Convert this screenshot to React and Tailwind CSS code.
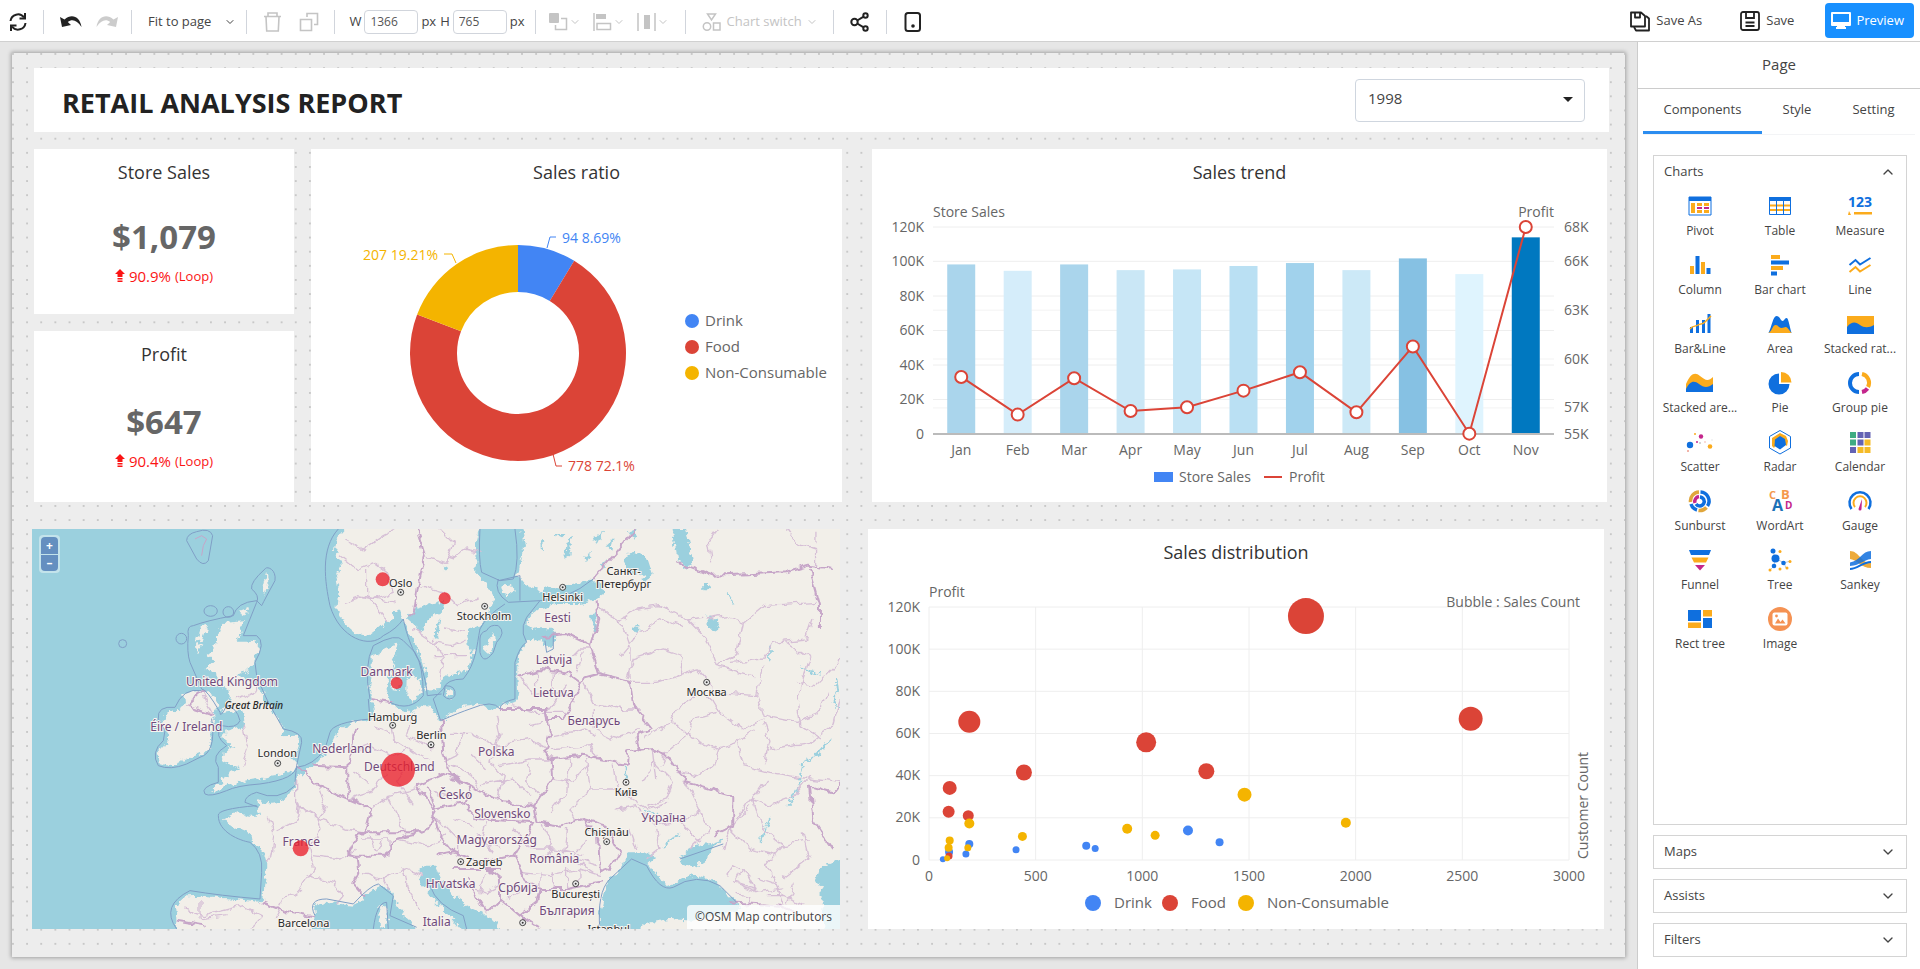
import React, { useState } from 'react';
import { FiChevronDown, FiChevronUp } from 'react-icons/fi';

const BLUE = '#4285f4';
const RED = '#db4437';
const YELLOW = '#f4b400';
const ICON_BLUE = '#0f6fde';
const ICON_ORANGE = '#fbab1c';
const ICON_PINK = '#c4268c';

/* ---------- toolbar ---------- */

function Divider() {
  return <span className="h-6 w-px bg-gray-300" />;
}

function ToolIcon({ label, children, disabled = false }) {
  return (
    <button type="button" aria-label={label} disabled={disabled} className="flex h-6 w-[22px] items-center justify-center">
      <svg viewBox="0 0 22 22" className="h-[22px] w-[22px] shrink-0" fill="none" stroke="currentColor" strokeWidth="2">
        {children}
      </svg>
    </button>
  );
}

function MenuIcon({ label, children }) {
  return (
    <button type="button" aria-label={label} disabled className="flex h-6 items-center gap-px text-[#c4c4c4]">
      <svg viewBox="0 0 20 22" className="h-[22px] w-5" fill="none" stroke="currentColor" strokeWidth="1.5">
        {children}
      </svg>
      <FiChevronDown className="h-3 w-3" />
    </button>
  );
}

function SizeInput({ id, label, value, onChange }) {
  return (
    <div className="flex items-center gap-[3px]">
      <label htmlFor={id}>{label}</label>
      <input
        id={id}
        value={value}
        onChange={(e) => onChange(e.target.value)}
        className="h-6 w-[54px] rounded-sm border border-gray-300 pl-[5px] text-xs text-[#555] outline-none"
      />
      <span>px</span>
    </div>
  );
}

function Toolbar() {
  const [width, setWidth] = useState('1366');
  const [height, setHeight] = useState('765');

  return (
    <header className="flex h-[42px] items-center justify-between border-b border-[#d0d0d0] bg-white pr-[6px] pl-[7px] text-[13px] text-[#444]">
      <div className="flex items-center pt-[2px]">
        <div className="flex items-center text-[#222]">
          <ToolIcon label="Refresh">
            <path d="M3.5 10A7.5 7.5 0 0 1 17 6.5M18.500 12A7.500 7.500 0 0 1 5 15.500" />
            <path d="M18 2v5.500h-5.500M4 20v-5.500h5.500" />
          </ToolIcon>
        </div>
        <div className="ml-[14px] flex items-center gap-4">
          <Divider />
          <div className="flex items-center gap-[14px]">
            <ToolIcon label="Undo">
              <path d="M0 6l2 10 9-2-3.200-3C12 7.500 17 9 21.500 16 20 6 12 2 4.500 8.500z" fill="#222" stroke="none" />
            </ToolIcon>
            <ToolIcon label="Redo" disabled>
              <path d="M22 6l-2 10-9-2 3.200-3C10 7.500 5 9 .5 16 2 6 10 2 17.500 8.500z" fill="#ccc" stroke="none" />
            </ToolIcon>
          </div>
        </div>
        <div className="ml-[13px] flex items-center gap-4">
          <Divider />
          <button type="button" className="flex items-center gap-[13px]">
            Fit to page
            <FiChevronDown className="h-3 w-3" />
          </button>
        </div>
        <div className="ml-[10px] flex items-center gap-[14px]">
          <Divider />
          <div className="flex gap-[15px] text-[#c4c4c4]">
            <ToolIcon label="Delete" disabled>
              <path d="M3 5.500h17M7 5V2h9v3M5 6l.7 14h11.600L18 6" strokeWidth="1.600" />
            </ToolIcon>
            <ToolIcon label="Duplicate" disabled>
              <path d="M2.500 8.500h11v11h-11zM9 6V2.500h10.500v11H16" strokeWidth="1.600" />
            </ToolIcon>
          </div>
          <Divider />
          <div className="flex items-center gap-1">
            <SizeInput id="page-width" label="W" value={width} onChange={setWidth} />
            <SizeInput id="page-height" label="H" value={height} onChange={setHeight} />
          </div>
        </div>
        <div className="ml-[10px] flex items-center gap-3">
          <Divider />
          <div className="flex items-center gap-[11px]">
            <MenuIcon label="Layer order">
              <rect x="1" y="2" width="10" height="10" rx="1" fill="currentColor" stroke="none" />
              <path d="M13 7.500h5.500v11h-11V14" />
            </MenuIcon>
            <MenuIcon label="Align">
              <path d="M2 2v18" />
              <rect x="4" y="3" width="10" height="5" fill="currentColor" stroke="none" />
              <rect x="5" y="12.500" width="13.500" height="6" />
            </MenuIcon>
            <MenuIcon label="Distribute">
              <path d="M2 2v18M19 2v18" />
              <rect x="8" y="4" width="6" height="14" fill="currentColor" stroke="none" />
            </MenuIcon>
          </div>
        </div>
        <div className="ml-4 flex items-center gap-[15px]">
          <Divider />
          <button type="button" disabled className="flex items-center gap-1 text-[#c4c4c4]">
            <svg viewBox="0 0 22 22" className="h-[22px] w-[22px]" fill="none" stroke="currentColor" strokeWidth="1.500">
              <path d="M6.500 3h8L10.500 9z" />
              <circle cx="6" cy="15.500" r="3.700" />
              <rect x="12.500" y="12" width="6.500" height="7" />
            </svg>
            Chart switch
            <FiChevronDown className="h-3 w-3" />
          </button>
          <Divider />
          <div className="flex text-[#222]">
            <ToolIcon label="Share">
              <circle cx="5.500" cy="11" r="3.200" />
              <circle cx="16.500" cy="4.500" r="2.200" />
              <circle cx="16.500" cy="17.500" r="2.200" />
              <path d="M8.200 9.500l6-3.600M8.200 12.500l6 3.600" />
            </ToolIcon>
          </div>
          <Divider />
          <div className="flex text-[#222]">
            <ToolIcon label="Mobile layout">
              <rect x="3.500" y="2" width="14.500" height="18" rx="2.500" />
              <circle cx="11" cy="15" r="1.800" fill="currentColor" stroke="none" />
            </ToolIcon>
          </div>
        </div>
      </div>

      <div className="flex items-center">
        <button type="button" className="flex items-center gap-[5px]">
          <svg viewBox="0 0 22 22" className="h-[22px] w-[22px] text-[#222]" fill="none" stroke="currentColor" strokeWidth="1.800">
            <path d="M2 2.500h10l4 3.500v10.500h-14z M6 3v4.500h5V3" strokeLinejoin="round" />
            <path d="M17 6l3 2.500V20.500H7L5 17" strokeLinejoin="round" />
          </svg>
          Save As
        </button>
        <button type="button" className="ml-[37px] flex items-center gap-[5px]">
          <svg viewBox="0 0 22 22" className="h-[22px] w-[22px] text-[#222]" fill="none" stroke="currentColor" strokeWidth="1.800">
            <rect x="2" y="2" width="18" height="18" rx="2" />
            <path d="M7 2.500V8h8V2.500M6.500 12.500h9M6.500 16h9" />
          </svg>
          Save
        </button>
        <button type="button" className="ml-[31px] flex h-[35px] items-center gap-1 rounded-sm bg-[#1890ff] px-[5px] pr-[10px] text-white">
          <svg viewBox="0 0 22 22" className="h-[22px] w-[22px]" fill="currentColor">
            <path fillRule="evenodd" d="M2 2h18a1 1 0 0 1 1 1v12a1 1 0 0 1-1 1h-5v1h1v2H6v-2h1v-1H2a1 1 0 0 1-1-1V3a1 1 0 0 1 1-1zm1 2v8h16V4z" />
          </svg>
          Preview
        </button>
      </div>
    </header>
  );
}

/* ---------- dashboard cards ---------- */

function Card({ title, className = '', children }) {
  return (
    <section className={`flex min-w-0 flex-col bg-white ${className}`}>
      <h2 className="flex h-[43px] items-center justify-center pt-[2px] text-lg text-[#333]">{title}</h2>
      {children}
    </section>
  );
}

function Kpi({ title, value, change, className }) {
  return (
    <Card title={title} className={className}>
      <div className="flex grow flex-col items-center justify-center pb-[2px]">
        <p className="text-[33px] leading-12 font-bold text-[#666]">{value}</p>
        <p className="flex items-center gap-1 text-[15px] leading-[30px] text-[#fb1414]">
          <svg viewBox="0 0 10 14" className="h-[14px] w-[10px]" fill="currentColor">
            <path d="M5 0l5 5H7.500v3h-5V5H0zM2.500 9h5v1.500h-5zM2.500 11.500h5V13h-5z" />
          </svg>
          {change}
          <span className="text-[13px]">(Loop)</span>
        </p>
      </div>
    </Card>
  );
}

const RATIO = [
  { name: 'Drink', value: 94, label: '94 8.69%', color: BLUE, leader: '236,56 239,45 245,45', tx: 251, ty: 45, anchor: 'start' },
  { name: 'Food', value: 778, label: '778 72.1%', color: RED, leader: '242,262 245,274 251,274', tx: 257, ty: 273, anchor: 'start' },
  { name: 'Non-Consumable', value: 207, label: '207 19.21%', color: YELLOW, leader: '145,71 141,62 133,62', tx: 127, ty: 62, anchor: 'end' },
];

function DonutChart() {
  const cx = 207;
  const cy = 161;
  const total = RATIO.reduce((sum, d) => sum + d.value, 0);
  const point = (r, a) => `${cx + r * Math.sin(a)} ${cy - r * Math.cos(a)}`;
  let start = 0;

  return (
    <svg viewBox="0 0 531 310" className="block w-full" fontSize="15">
      {RATIO.map((d, i) => {
        const a0 = start;
        const a1 = start + (d.value / total) * Math.PI * 2;
        start = a1;
        const large = a1 - a0 > Math.PI ? 1 : 0;
        return (
          <g key={d.name}>
            <path
              d={`M${point(108, a0)}A108 108 0 ${large} 1 ${point(108, a1)}L${point(61, a1)}A61 61 0 ${large} 0 ${point(61, a0)}Z`}
              fill={d.color}
            />
            <polyline points={d.leader} fill="none" stroke={d.color} />
            <text x={d.tx} y={d.ty} textAnchor={d.anchor} dominantBaseline="central" fontSize="14" fill={d.color}>{d.label}</text>
            <circle cx="381" cy={129 + i * 26} r="7" fill={d.color} />
            <text x="394" y={128 + i * 26} dominantBaseline="central" fill="#666">{d.name}</text>
          </g>
        );
      })}
    </svg>
  );
}

const TREND = [
  { month: 'Jan', sales: 98.3, profit: 58.9, color: '#aad5ec' },
  { month: 'Feb', sales: 94.6, profit: 56.59, color: '#d5edfa' },
  { month: 'Mar', sales: 98.3, profit: 58.82, color: '#aad5ec' },
  { month: 'Apr', sales: 95, profit: 56.81, color: '#cae7f6' },
  { month: 'May', sales: 95.4, profit: 57.04, color: '#c6e6f6' },
  { month: 'Jun', sales: 97.4, profit: 58.06, color: '#bae0f3' },
  { month: 'Jul', sales: 99.1, profit: 59.19, color: '#a1d2ec' },
  { month: 'Aug', sales: 95, profit: 56.73, color: '#cce9f7' },
  { month: 'Sep', sales: 101.8, profit: 60.77, color: '#86c1e3' },
  { month: 'Oct', sales: 92.7, profit: 55.42, color: '#dff4fe' },
  { month: 'Nov', sales: 114, profit: 68.1, color: '#0078c0' },
];

function TrendChart() {
  const left = 61;
  const right = 682;
  const top = 35;
  const bottom = 242;
  const step = (right - left) / TREND.length;
  const xAt = (i) => left + step * (i + 0.5);
  const salesY = (v) => bottom - (v / 120) * (bottom - top);
  const profitY = (v) => bottom - ((v - 55.4) / 12.7) * (bottom - top);
  const salesTicks = [0, 20, 40, 60, 80, 100, 120];
  const profitTicks = [57, 60, 63, 66];

  return (
    <svg viewBox="0 0 735 310" className="block w-full" fontSize="14" fill="#666">
      {salesTicks.map((t) => (
        <g key={t}>
          <line x1={left} x2={right} y1={salesY(t)} y2={salesY(t)} stroke="#eee" />
          <text x="52" y={salesY(t) - 1} textAnchor="end" dominantBaseline="central">{t ? `${t}K` : '0'}</text>
        </g>
      ))}
      {profitTicks.map((t) => (
        <g key={t}>
          <line x1={left} x2={right} y1={profitY(t)} y2={profitY(t)} stroke="#f3f3f3" />
          <text x="692" y={profitY(t) - 1} dominantBaseline="central">{t}K</text>
        </g>
      ))}
      <text x="692" y={top - 1} dominantBaseline="central">68K</text>
      <text x="692" y={bottom - 1} dominantBaseline="central">55K</text>
      <text x={left} y="19" dominantBaseline="central">Store Sales</text>
      <text x={right} y="19" textAnchor="end" dominantBaseline="central">Profit</text>

      {TREND.map((d, i) => (
        <g key={d.month}>
          <rect x={xAt(i) - 14} y={salesY(d.sales)} width="28" height={bottom - salesY(d.sales)} fill={d.color} />
          <text x={xAt(i)} y="257" textAnchor="middle" dominantBaseline="central">{d.month}</text>
        </g>
      ))}
      <line x1={left} x2={right} y1={bottom} y2={bottom} stroke="#bbb" strokeWidth="2" />
      <polyline
        points={TREND.map((d, i) => `${xAt(i)},${profitY(d.profit)}`).join(' ')}
        fill="none"
        stroke={RED}
        strokeWidth="2"
      />
      {TREND.map((d, i) => (
        <circle key={d.month} cx={xAt(i)} cy={profitY(d.profit)} r="6" fill="#fff" stroke={RED} strokeWidth="2" />
      ))}

      <rect x="282" y="280" width="19" height="10" fill={BLUE} />
      <text x="307" y="284" dominantBaseline="central">Store Sales</text>
      <line x1="392" x2="410" y1="285" y2="285" stroke={RED} strokeWidth="2" />
      <text x="417" y="284" dominantBaseline="central">Profit</text>
    </svg>
  );
}

// each bubble: [customer count, profit in thousands, radius]
const BUBBLES = [
  {
    name: 'Drink',
    color: BLUE,
    x: 225,
    points: [
      [1214, 14, 5], [1362, 8.4, 4], [737, 6.8, 4], [779, 5.4, 3.5], [408, 4.9, 3.5],
      [189, 7.6, 4], [173, 2.8, 3.5], [94, 3.8, 4], [65, 0.3, 3],
    ],
  },
  {
    name: 'Food',
    color: RED,
    x: 302,
    points: [
      [1767, 115.7, 18], [2539, 67, 12], [189, 65.6, 11], [1018, 55.8, 10], [445, 41.5, 8],
      [1300, 42.1, 8], [97, 34.2, 7], [92, 22.9, 6], [184, 21, 5.5], [94, 1.9, 3.5],
    ],
  },
  {
    name: 'Non-Consumable',
    color: YELLOW,
    x: 378,
    points: [
      [1479, 31, 7], [1954, 17.7, 5], [189, 17.3, 5], [929, 14.8, 5], [1060, 11.7, 4.5],
      [438, 11.2, 4.5], [97, 9.3, 4], [92, 5.8, 4], [182, 5.8, 3.5], [85, 0.8, 3],
    ],
  },
];

function DistributionChart() {
  const xAt = (v) => 61 + (v / 3000) * 640;
  const yAt = (v) => 288 - (v / 120) * 253;

  return (
    <svg viewBox="0 0 736 357" className="block w-full" fontSize="14" fill="#666">
      {[0, 20, 40, 60, 80, 100, 120].map((t) => (
        <g key={t}>
          <line x1="61" x2="701" y1={yAt(t)} y2={yAt(t)} stroke="#eee" />
          <text x="52" y={yAt(t) - 1} textAnchor="end" dominantBaseline="central">{t ? `${t}K` : '0'}</text>
        </g>
      ))}
      {[0, 500, 1000, 1500, 2000, 2500, 3000].map((t) => (
        <g key={t}>
          <line x1={xAt(t)} x2={xAt(t)} y1="35" y2="288" stroke="#eee" />
          <text x={xAt(t)} y="303" textAnchor="middle" dominantBaseline="central">{t}</text>
        </g>
      ))}
      <text x="61" y="19" dominantBaseline="central">Profit</text>
      <text x="712" y="29" textAnchor="end" dominantBaseline="central">Bubble : Sales Count</text>
      <text transform="translate(714 287) rotate(-90)" dominantBaseline="central">Customer Count</text>
      {BUBBLES.map((s) => (
        <g key={s.name}>
          {s.points.map(([x, y, r]) => (
            <circle key={`${x}-${y}`} cx={xAt(x)} cy={yAt(y)} r={r} fill={s.color} />
          ))}
          <circle cx={s.x} cy="331" r="8" fill={s.color} />
          <text x={s.x + 21} y="330" fontSize="15" dominantBaseline="central">{s.name}</text>
        </g>
      ))}
    </svg>
  );
}

/* ---------- map ---------- */

// map geometry is kept in tile units, three to a pixel, with its corner at (36, 30)
const px = (x) => (x - 36) / 3;
const py = (y) => (y - 30) / 3;

const LAND = [
  // continental Europe
  'M1055 540L1065 575 1050 602 1000 610 960 630 945 660 930 690 905 715 885 740 860 755 840 765 825 790 820 815 770 850 725 855 712 838 715 870 722 890 690 890 650 880 612 898 630 918 660 930 695 945 700 970 730 1000 742 1040 735 1090 725 1150 700 1145 620 1138 550 1130 500 1132 468 1160 472 1200 470 1240H870L888 1190 885 1160 920 1148 960 1155 1000 1160 1040 1130 1080 1100 1110 1115 1130 1150 1160 1200 1205 1240H1330L1290 1190 1250 1150 1205 1095 1198 1055 1215 1040 1245 1040 1262 1080 1290 1120 1360 1170 1430 1210 1445 1240H2470V20H1505L1515 80 1500 130 1495 170 1520 200 1560 215 1610 205 1660 195 1710 185 1745 190 1755 220 1730 240 1680 255 1610 255 1560 268 1520 300 1535 325 1590 325 1610 345 1600 385 1580 388 1570 370 1540 358 1520 370 1500 400 1492 440 1492 480 1495 520 1490 545 1445 560 1410 575 1380 555 1330 560 1290 585 1262 605 1235 565 1200 560 1170 580 1140 570 1112 555 1100 510 1105 470 1125 445 1115 425 1130 400 1135 370 1110 385 1080 400 1055 410 1055 450 1048 500z',
  // Scandinavia
  'M985 20L950 60 945 100 965 130 948 170 958 220 952 270 975 315 1010 345 1045 350 1080 325 1110 300 1138 268 1145 290 1165 330 1190 380 1210 430 1222 480 1215 512 1262 510 1265 480 1290 462 1340 455 1352 420 1345 370 1340 330 1380 320 1400 300 1412 270 1425 240 1405 200 1380 180 1365 160 1370 120 1368 70 1380 20z',
  // Great Britain
  'M610 312L672 307 668 325 650 368 690 368 718 372 712 400 700 425 690 450 650 470 690 482 722 510 732 540 748 565 770 590 788 620 785 652 828 650 838 672 832 700 812 715 835 738 830 752 760 772 690 782 640 795 612 802 590 818 572 812 602 790 625 760 658 745 608 730 605 712 640 680 614 660 612 635 668 625 676 598 670 572 610 582 603 565 630 540 625 512 592 500 588 460 560 450 580 425 560 405 578 390 592 350 600 325z',
  // Ireland
  'M490 525L545 512 575 525 592 555 580 590 575 640 570 690 540 705 500 720 450 738 420 730 410 705 432 680 450 655 430 625 425 600 440 580 480 575 492 550z',
  // islands
  'M545 322l20-5-16 42-20 15zM528 380l16-5-12 28zM738 160l8 30-12 34-8-14zM660 275l22-8 4 14-16 10zM1115 478h30l-5 38-25-2zM1160 478l35-8 10 40-28 42-18-30zM1085 1160l18 12-2 42-10 18-20-30zM1420 340l5 22-22 42-12-12zM1360 390l-24 60 5 2 26-60zM1280 515l16-4 4 16-14 6zM1440 205l30-10 18 22-30 16zM1520 310l25-10 25 15-30 15-20-5zM1535 280l20-4-5 20z',
];

const LAKES = [
  'M1810 120L1840 95 1882 120 1895 160 1880 185 1845 165 1825 150zM1958 30h40l10 50 10 55-18 12-28-30z',
  'M1160 300l30-30 50-15 30-10-5 35-40 20-20 40zM2060 290l30 15 10 20-20 15-15-20zM2050 195h22v16h-22zM1835 325l20-8v14l-14 6zM1710 290l15-5 10 60-12-5z',
  'M1560 60l14 4-10 30zM1640 70l16-20-8 60-12 10zM1720 50l30-8-20 40zM1760 80l20-20-6 36zM1690 110l20-8-10 34zM1740 130l20-10-8 30zM1600 45h40l-20 10zM1830 40l24-10-12 30z',
  'M1268 140l14 10-8 10zM1246 330l18-40-4 50-16 20z',
  // Black Sea and Azov
  'M1770 1080L1800 1050 1830 1000 1870 1000 1912 1010 1880 1040 1912 1060 1930 1090 1950 1102 1990 1075 2030 1070 2080 1085 2130 1130 2170 1170 2020 1205 1950 1200 1890 1210 1850 1240H1740L1735 1190 1745 1150 1755 1110z',
  'M1980 1010L2020 985 2070 975 2115 960 2080 985 2060 1020 2030 1045 1990 1035z',
  'M2470 1020L2405 1045 2385 1075 2405 1110 2405 1150 2415 1240H2470z',
];

const RIVERS = 'M2460 570l-20-20 15-30-5-40M2430 660l-30 40-50 30-10 60-35 70M2250 900l-30 70M1870 870l40 20M1817 780v-40M2250 380v50M1930 990l20-30 30-10M2340 445l60 20M2120 220l20 30';

const WATER_BORDERS = [
  'M955 30C900 90 915 190 930 260C960 360 1050 390 1090 350Q1130 330 1150 300C1160 350 1180 400 1200 430Q1220 490 1222 530L1265 525',
  'M1380 30Q1375 120 1385 160L1440 185 1480 180Q1500 130 1485 30M1435 180Q1420 220 1465 250L1560 245Q1640 245 1720 180M1435 185L1500 170 1500 245',
  'M1455 255Q1400 290 1380 330C1370 380 1370 430 1330 480Q1280 480 1270 510L1240 540 1262 605Q1320 580 1350 570Q1420 540 1440 570Q1440 550 1485 540V430Q1500 380 1520 370Q1490 320 1540 270L1560 245',
  'M505 350Q500 320 520 320Q560 305 640 290Q650 250 710 245L725 260Q735 240 765 185C770 150 740 140 735 150Q690 190 695 210Q720 230 710 250L670 350H710Q740 370 705 430L710 470Q730 520 745 550L790 630Q850 640 845 670L830 740Q830 780 720 795Q650 800 620 815Q570 835 555 825Q540 805 595 790V745Q570 710 620 680Q580 650 605 620Q650 630 660 605Q650 565 620 560Q600 600 600 580Q560 510 545 510L510 430Q500 400 505 350z',
  'M545 515Q490 505 465 565Q410 560 415 600L435 635 430 665Q390 700 415 740Q450 755 500 735L540 715Q590 700 575 600',
  'M500 65L530 120Q550 145 565 125L578 50Q570 25 530 38Q500 45 500 65z',
  'M1045 540L1050 600Q940 610 930 640L915 690Q880 740 830 745Q825 770 825 800Q775 850 710 820Q675 830 675 850L715 865M710 860Q590 870 595 890C595 940 660 965 690 970Q730 1000 725 1060L720 1140Q600 1130 510 1115Q420 1160 470 1230',
  'M1050 540Q1030 440 1060 380Q1130 340 1150 365L1185 400Q1210 440 1210 530Q1170 580 1110 550',
  'M885 1190Q860 1140 920 1140L1000 1155Q1050 1100 1075 1095L1120 1130 1110 1190 1190 1225M1060 1230Q1070 1150 1100 1150L1105 1233',
  'M1230 1100Q1250 1160 1330 1190L1340 1230M1740 1233Q1730 1120 1770 1080L1835 1020 1880 1040Q1920 1120 1960 1105Q2030 1060 2100 1100L2150 1150M1980 1020L2110 975',
  'M1380 360Q1380 340 1400 335Q1410 315 1435 320Q1460 340 1430 370L1420 400Q1390 440 1380 400zM1276 500Q1310 500 1305 530Q1290 550 1270 530zM1575 365l5 35 20-10v-40',
];

const BORDERS = [
  'M1190 30L1215 110 1195 200 1180 290 1165 288M1850 30L1720 180M1730 245L1735 300 1710 380 1735 465M1565 355L1640 345 1710 378M1735 465L1700 475 1680 490 1640 460 1560 450 1490 468M1735 465L1830 490 1840 560 1895 630 1850 650 1860 700M1680 490L1660 550 1630 600 1585 600 1580 570 1440 570',
  'M1580 570L1590 650 1575 700 1595 720 1690 710 1820 735 1825 700 1900 690 1950 720 2000 790 2070 810 2140 830 2140 920 2080 950',
  'M1595 720L1600 780 1560 830 1540 860 1450 850 1350 800 1290 770 1270 700 1262 600M1540 860L1550 910 1620 920 1690 900 1760 920 1800 1000 1770 1050 1740 1060 1735 960 1690 900',
  'M1190 800L1270 765 1350 800 1330 850 1240 870 1190 800M1330 850L1370 900 1540 910 1480 1010 1380 1030 1300 1000 1260 950 1240 880M1220 800L1250 880 1215 940 1015 940M1015 940L985 1005 1010 1010 1100 1010 1130 960 1215 940',
  'M1480 1010L1520 1090 1560 1110 1640 1110 1750 1090M1380 1030L1440 1080 1440 1140 1500 1190 1550 1150 1560 1110M1250 1010L1300 1000M1300 1050L1440 1050M1440 1140L1400 1180 1340 1080M1500 1190L1560 1230',
  'M835 745L880 790 960 830 985 840 1055 870 1035 940 1015 940M880 740L985 745 990 700 1010 630M985 745L985 840M1010 1010L1015 1060 1000 1090 1035 1130M725 1150L800 1180 885 1195M550 515L500 560 580 585M1055 540L1120 550M470 1205L560 1220',
  'M1975 130L2080 170 2300 160 2370 140 2440 150M2370 150L2400 260 2400 330M2470 780L2440 820 2370 800 2380 900 2440 990M2130 1150L2280 1160 2340 1190',
];

const REGIONS = [
  'M970 60l60 30 60-40 40-20M960 110l50 40 50-20 40 30 20 60-60 20-50-10M1040 150v80l60 70M975 250l60-20 90 20M1215 110l60 20 60-40 50 10M1200 200l70 20 40 40 60-20M1260 30l40 40-20 60M1275 330l60 10M1240 360l30 60-10 60M1180 330l60 40 60 10 40-20M1240 410h90',
  'M745 890l20 60-10 60-20 20M770 935l60-30 10-50M830 780v80l60 30 10 40-30 60 10 60-40 60-50 30-30 60M890 900l90 30 60 10M840 860l60 40M880 1010l80 10 50-30M860 1070l80 20 30 40-20 25M895 800l20 60-25 40M1055 870l50-40 30 60 20 60M1100 760l-50 60-60 20M1000 760l50 30M990 700l60-20 60 30 60-20 60 30M1110 600l10 60 60 40M1060 620l50 20M1180 580l-20 70 80 40M1170 730l-40 60 50 60M1100 830l90-20M1020 960h90v50M1050 950l20 50M1090 960l-20 40M1030 1060l60 20 60-30 60 20M1090 1080l20 40M1150 1050l10 60 40 60M1130 960l90 20 60-30M490 1170l60 20 120-30 60 30-40 40M540 1140v60l80-10',
  'M670 620l15 60-20 60M650 540l60-30 20-20M505 550l40-30 30 60M1290 640l60 0 80 40 100-20 50 30M1430 590l10 60-30 80 40 40-20 80M1350 700l50 50M1530 620l40-10M1270 730l80 30 30 50M1440 740l90-20 60 0M1380 800l100-20 50 50M1330 640l-20 70-40 20M1530 730l-10 60 40 40M1500 470l40 60 90-10 40 30M1550 450v60M1600 460v80M1640 500l-60 80M1480 560l60 20 100 0M1690 400l-20 60M1660 410l20-20 40 0M1690 490l30 60 90 20 50 0M1720 570v60l60 30 80-30M1600 650l100-20 30 20M1590 690l120-10 20 40M1830 490h80l70-20 10-60-60-20-90 30-20 60M1800 410l50-60 80-50 60 20M1730 260l80 60 20 60v100M1790 310l60-40 70-10 80 40 50-5',
  'M2000 300l60 60 30 80 110 30M2060 300l60-10 50 20-20 100-60 30M2170 310l60-50 160-10M2130 430l100-10 30-50 100-10 20-60M2230 440l-20 90-120-10-60-70-60 20M2210 530l20 60 100 20 60-20 30-70M2230 600l-60 30-80-60-30-50-70 30-40 60-80 50M1950 600l50 50 90 40 60-20 60-40M2000 650l-60 50-20 40M2090 580l-70 20-15 50M2100 680l-20 60-50 30-60-10M2150 660l20 80 80 20 120 20 90 10M2230 610l20 60-20 70M2250 690l120-20 70-50 20-90M2330 560l10 60 60 40M2330 490l60 10 60-60 10-40M2300 370l70 50-20 60-20 70M2370 770l-50 60-80 30-50-20-40 60M2190 860l-60 70-20 60M2240 780l-40 60 30 90 60 50 80-20M2130 930l60 60 80 20M2290 980l-50 60 40 80 70 40M2350 940l20 80-80 60M2140 1090l80 30 70-10M2300 30l30 40 60 20v50M2385 70v-35M2075 130l-10-60 30-40',
  'M1600 780l60 10 40-50M1650 720l-10 100-50 60M1700 720l10 90-60 60 20 40M1780 740l10 70 90 60 60-20M1710 810l80 0M1790 870l60-10 60 60 70-10 60-40-40-80M1870 790l30-60 60 60-20 50-60 20M2040 870l30 60-60 60M1910 930l10 60-40 30M1830 930l20 60M1980 910l60 60M1900 690l10 90M1550 1010l120 10 60 20M1570 920l30 60-30 40M1640 930l-10 80M1500 1060l90 10 90-20 60 20M1560 1060v50M1600 1060v50M1640 1050v60M1680 1050v50M1540 990l60 0 90 20M1700 960l-40 60 60 40M1480 930l60 60M1400 910l-20 60 60 20M1420 1000l-50-60M1300 900l60 20M1250 900l60 60 0 50M1340 1100l60 20 40-20M1400 1060l-20 60M1460 1140l60-30M1240 820l60 20',
  'M2120 1070l20-30 40 20 30 60M2150 1120l40 10-10 30M2210 1080l60 20 20 60M2240 1130l60 0M2170 1050l-20 40 60 20M2320 1100l-20 60',
];

const COUNTRIES = [
  ['United Kingdom', 636, 486], ['Éire / Ireland', 499, 623], ['Danmark', 1100, 457],
  ['Nederland', 966, 689], ['Deutschland', 1138, 741], ['France', 844, 966],
  ['Eesti', 1613, 296], ['Latvija', 1602, 421], ['Lietuva', 1600, 519],
  ['Беларусь', 1722, 604], ['Polska', 1429, 697], ['Česko', 1306, 826],
  ['Slovensko', 1447, 882], ['Magyarország', 1430, 960], ['România', 1603, 1018],
  ['Україна', 1931, 894], ['Hrvatska', 1292, 1094], ['Србија', 1494, 1105],
  ['България', 1641, 1174], ['Italia', 1250, 1207],
];

const CITIES = [
  ['Oslo', 1142, 189, 1142, 220], ['Stockholm', 1392, 290, 1394, 262],
  ['Helsinki', 1628, 231, 1628, 205], ['Санкт-', 1811, 154], ['Петербург', 1811, 194],
  ['Hamburg', 1118, 593, 1118, 619], ['Berlin', 1234, 645, 1233, 677],
  ['London', 772, 701, 773, 733], ['Москва', 2060, 517, 2060, 490],
  ['Київ', 1818, 818, 1818, 790], ['Chișinău', 1760, 936, 1760, 968],
  ['Zagreb', 1393, 1027, 1322, 1028], ['București', 1667, 1123, 1667, 1094],
  ['Barcelona', 851, 1210], ['Istanbul', 1766, 1229], ['', 0, 0, 1508, 1211],
];

const MAP_BUBBLES = [[1088, 181, 7], [1274, 238, 6], [1130, 492, 6], [1134, 752, 17], [842, 988, 8]];

function SalesMap() {
  return (
    <section aria-label="Sales map" className="relative min-w-0 flex-[808] overflow-hidden bg-[#9bd0de]">
      <svg viewBox="0 0 808 400" className="block w-full font-['Noto_Sans',sans-serif]">
        <defs>
          <filter id="rough" x="0" y="0" width="100%" height="100%">
            <feTurbulence type="fractalNoise" baseFrequency="0.16" numOctaves="3" seed="4" result="n" />
            <feDisplacementMap in="SourceGraphic" in2="n" scale="9" xChannelSelector="R" yChannelSelector="G" />
          </filter>
          <filter id="wobble" x="0" y="0" width="100%" height="100%">
            <feTurbulence type="fractalNoise" baseFrequency="0.1" numOctaves="2" seed="9" result="n" />
            <feDisplacementMap in="SourceGraphic" in2="n" scale="9" xChannelSelector="R" yChannelSelector="G" />
          </filter>
        </defs>
        <g filter="url(#rough)">
          <rect x="-10" y="-10" width="828" height="421" fill="#9bd0de" />
          <g transform="scale(0.3333) translate(-36 -30)">
            {LAND.map((d) => <path key={d} d={d} fill="#f2efe9" />)}
            {LAKES.map((d) => <path key={d} d={d} fill="#9bd0de" />)}
            <path d={RIVERS} fill="none" stroke="#9bd0de" strokeWidth="5" />
          </g>
        </g>
        <g filter="url(#wobble)">
          <g transform="scale(0.3333) translate(-36 -30)" fill="none" strokeLinejoin="round">
            {REGIONS.map((d) => <path key={d} d={d} stroke="#d6bfd6" strokeWidth="4" />)}
            {BORDERS.map((d) => <path key={d} d={d} stroke="#c6a5c8" strokeWidth="6" />)}
          </g>
        </g>
        <g transform="scale(0.3333) translate(-36 -30)" fill="none" stroke="#7f9fc6" strokeWidth="3" strokeLinejoin="round">
          {WATER_BORDERS.map((d) => <path key={d} d={d} />)}
          <circle cx="308" cy="374" r="12" />
          <circle cx="484" cy="359" r="16" />
          <ellipse cx="572" cy="276" rx="20" ry="16" />
          <circle cx="625" cy="279" r="16" />
          <path d="M525 60l20-10 15 10-10 20-5 30" stroke="#c6a5c8" />
        </g>

        {COUNTRIES.map(([name, x, y]) => (
          <text
            key={name}
            x={px(x)}
            y={py(y)}
            textAnchor="middle"
            dominantBaseline="central"
            fontSize="12"
            fill="#704a7c"
            stroke="#f7f4f0"
            strokeWidth="2"
            paintOrder="stroke"
          >
            {name}
          </text>
        ))}
        {CITIES.map(([name, x, y, dotX, dotY]) => (
          <g key={name}>
            {dotX && (
              <>
                <circle cx={px(dotX)} cy={py(dotY)} r="3" fill="#eee" stroke="#444" />
                <circle cx={px(dotX)} cy={py(dotY)} r="1" fill="#333" />
              </>
            )}
            <text
              x={px(x)}
              y={py(y)}
              textAnchor="middle"
              dominantBaseline="central"
              fontSize="11"
              fill="#2a2a2a"
              stroke="#f7f4f0"
              strokeWidth="2"
              paintOrder="stroke"
            >
              {name}
            </text>
          </g>
        ))}
        <text x={px(702)} y={py(559)} textAnchor="middle" dominantBaseline="central" fontSize="10" fontStyle="italic" fontWeight="500" fill="#2a2a2a">
          Great Britain
        </text>
        {MAP_BUBBLES.map(([x, y, r]) => (
          <circle key={x} cx={px(x)} cy={py(y)} r={r} fill="#ea1f2b" fillOpacity="0.78" />
        ))}
      </svg>

      <div className="absolute top-[6px] left-[7px] flex flex-col gap-px rounded-sm bg-white/40 p-[2px]">
        <button type="button" aria-label="Zoom in" className="h-[17px] w-[17px] rounded-t-sm bg-[#648fc0] text-xs leading-4 font-bold text-white">+</button>
        <button type="button" aria-label="Zoom out" className="h-4 w-[17px] rounded-b-sm bg-[#648fc0] text-xs leading-4 font-bold text-white">–</button>
      </div>
      <p className="absolute right-0 bottom-0 rounded-tl bg-white/80 px-2 text-xs leading-6 text-[#444]">©OSM Map contributors</p>
    </section>
  );
}

/* ---------- side panel ---------- */

const CHART_TYPES = [
  {
    name: 'Pivot',
    icon: (
      <>
        <path d="M3 3h22v18H3z" fill="#fff" stroke={ICON_BLUE} />
        <path d="M3 3h22v4H3z" fill={ICON_BLUE} />
        <path d="M5 9h4v10H5z" fill={ICON_ORANGE} />
        <path d="M11 9h5v3h-5zM18 9h5v3h-5zM11 16h5v3h-5zM18 16h5v3h-5z" fill={ICON_ORANGE} />
        <path d="M11 13h5v2h-5zM18 13h5v2h-5z" fill={ICON_PINK} />
      </>
    ),
  },
  {
    name: 'Table',
    icon: (
      <>
        <path d="M3 3h22v4H3z" fill={ICON_BLUE} />
        <path d="M4 11.500h20M4 16h20" stroke={ICON_ORANGE} strokeWidth="2" />
        <path d="M3.500 4v16.500h21V4M10.500 6v15M17.500 6v15" fill="none" stroke={ICON_BLUE} />
      </>
    ),
  },
  {
    name: 'Measure',
    icon: (
      <>
        <text x="14" y="13" textAnchor="middle" fontSize="14" fontWeight="700" fill={ICON_BLUE}>123</text>
        <path d="M3 17l2 4H2zM8 18h18v2.500H8z" fill={ICON_ORANGE} />
      </>
    ),
  },
  {
    name: 'Column',
    icon: (
      <>
        <path d="M4 13h4v8H4zM15 9h4v12h-4z" fill={ICON_ORANGE} />
        <path d="M9.500 3h4v18h-4zM20.500 15h4v6h-4z" fill={ICON_BLUE} />
      </>
    ),
  },
  {
    name: 'Bar chart',
    icon: (
      <>
        <path d="M5 2h9v4H5zM5 13h12v4H5z" fill={ICON_ORANGE} />
        <path d="M5 7.500h18v4H5zM5 18.500h6v4H5z" fill={ICON_BLUE} />
      </>
    ),
  },
  {
    name: 'Line',
    icon: (
      <g fill="none" strokeWidth="2">
        <path d="M3.500 12l6-5 4.500 4.500L24.500 5" stroke={ICON_BLUE} />
        <path d="M3.500 19l6-5 4.500 4.500L24.500 12" stroke={ICON_ORANGE} />
      </g>
    ),
  },
  {
    name: 'Bar&Line',
    icon: (
      <>
        <path d="M4 15h3v6H4zM10 8h3v13h-3zM16 8h3v13h-3zM21.500 2h3v19h-3z" fill={ICON_BLUE} />
        <path d="M4 17c3-4 5-2 8-4s4 0 7-3l6-6" fill="none" stroke={ICON_ORANGE} strokeWidth="1.500" />
      </>
    ),
  },
  {
    name: 'Area',
    icon: (
      <>
        <path d="M2.500 21C6 14 7 4 10.500 4s4 5 6 5 2-3 4-3 3 8 5 15z" fill={ICON_BLUE} />
        <path d="M2.500 21c4-2 4-8 7-8s3 3 6 3 4-2 6 0l4 5z" fill={ICON_ORANGE} />
      </>
    ),
  },
  {
    name: 'Stacked rat...',
    icon: (
      <>
        <path d="M1 4h27v18H1z" fill={ICON_ORANGE} />
        <path d="M1 15c5-6 9-5 13-2s9 3 14 0v9H1z" fill={ICON_BLUE} />
      </>
    ),
  },
  {
    name: 'Stacked are...',
    icon: (
      <>
        <path d="M0 13C5 2 9 1 14 5s8 6 13 1v15H0z" fill={ICON_ORANGE} />
        <path d="M0 18c4-8 8-9 13-5s9 4 14 0v8H0z" fill={ICON_BLUE} />
      </>
    ),
  },
  {
    name: 'Pie',
    icon: (
      <>
        <path d="M13 2.500V13h10.500A10.500 10.500 0 1 1 13 2.500z" fill={ICON_BLUE} />
        <path d="M15 1a10.500 10.500 0 0 1 10.500 10.500H15z" fill={ICON_ORANGE} />
      </>
    ),
  },
  {
    name: 'Group pie',
    icon: (
      <g fill="none" strokeWidth="4">
        <path d="M13 3a9 9 0 0 0 0 18" stroke={ICON_BLUE} />
        <path d="M16 3a9 9 0 0 1 6 13" stroke={ICON_ORANGE} />
        <path d="M21.500 17.500A9 9 0 0 1 16 21" stroke={ICON_PINK} />
      </g>
    ),
  },
  {
    name: 'Scatter',
    icon: (
      <>
        <circle cx="4" cy="15" r="3.200" fill={ICON_BLUE} />
        <circle cx="15" cy="6.500" r="2.200" fill={ICON_PINK} />
        <circle cx="24" cy="16.500" r="2.300" fill={ICON_ORANGE} />
        <circle cx="11" cy="12" r="1" fill={ICON_PINK} />
        <circle cx="9" cy="4" r="1" fill={ICON_ORANGE} />
        <circle cx="14" cy="13" r=".7" fill="#888" />
        <circle cx="2" cy="21" r="1" fill="#ee9b8d" />
        <circle cx="19" cy="12" r=".7" fill="#ee9b8d" />
        <circle cx="26" cy="10" r=".7" fill="#ddd" />
      </>
    ),
  },
  {
    name: 'Radar',
    icon: (
      <>
        <path d="M14 .5l10.500 6v11.500L14 24 3.500 18V6.500z" fill="#fff" stroke={ICON_BLUE} />
        <path d="M14 3l6 3 2 5-1 5-8-6-5 8-2-2V8z" fill={ICON_ORANGE} />
        <path d="M14 6l5 3 1 6-6 4.500L8.500 16 9 9.500z" fill={ICON_BLUE} />
      </>
    ),
  },
  {
    name: 'Calendar',
    icon: (
      <>
        <path d="M4 2h6v6H4zM4 9.500h6v6H4z" fill="#3fac83" />
        <path d="M11.500 2h6v6h-6zM18.500 2h6v6h-6zM11.500 9.500h6v6h-6zM4 17h6v6H4z" fill="#6463b4" />
        <path d="M18.500 9.500h6v6h-6zM11.500 17h6v6h-6zM18.500 17h6v6h-6z" fill="#f5bb27" />
      </>
    ),
  },
  {
    name: 'Sunburst',
    icon: (
      <g fill="none" strokeWidth="3.500">
        <path d="M14.500 3a9 9 0 0 1 7 14" stroke={ICON_BLUE} />
        <path d="M4.500 13A9 9 0 0 1 13 3M20.500 18.500a9 9 0 0 1-8 3" stroke="#e0a63c" />
        <path d="M11 21a9 9 0 0 1-6-6" stroke={ICON_BLUE} />
        <path d="M14 8a4.500 4.500 0 1 1-4 7" stroke={ICON_BLUE} />
        <path d="M9 14a5 5 0 0 1 4-6.500" stroke={ICON_PINK} />
      </g>
    ),
  },
  {
    name: 'WordArt',
    icon: (
      <g fontWeight="700">
        <text x="3" y="10" fontSize="11" fill="#f5984c">C</text>
        <text x="15" y="10" fontSize="13" fill="#f5984c">B</text>
        <text x="6" y="22" fontSize="16" fill="#1d72b8">A</text>
        <text x="19" y="20" fontSize="10" fill={ICON_PINK}>D</text>
      </g>
    ),
  },
  {
    name: 'Gauge',
    icon: (
      <>
        <path d="M5.500 20A10.500 10.500 0 1 1 22.500 20" fill="none" stroke={ICON_BLUE} strokeWidth="2.500" />
        <path d="M9 18A6.500 6.500 0 1 1 19 18" fill="none" stroke={ICON_ORANGE} strokeWidth="2" />
        <path d="M16 10l-.5 10a1.500 1.500 0 0 1-3 0z" fill={ICON_PINK} />
      </>
    ),
  },
  {
    name: 'Funnel',
    icon: (
      <>
        <path d="M3 2h22l-2 5H5z" fill={ICON_BLUE} />
        <path d="M5.500 9.500h17l-2.500 5H8z" fill={ICON_ORANGE} />
        <path d="M9 17h10l-5 5.500z" fill={ICON_PINK} />
      </>
    ),
  },
  {
    name: 'Tree',
    icon: (
      <>
        <path d="M7 3l2 7 9 5 6-2M9 10l-1 8M18 15l2 5M8 18l-4 4" stroke="#bcd" fill="none" />
        <circle cx="9.500" cy="10.500" r="4" fill={ICON_BLUE} />
        <circle cx="7" cy="3" r="2.500" fill={ICON_BLUE} />
        <circle cx="8" cy="18" r="2.300" fill={ICON_BLUE} />
        <circle cx="17.500" cy="15" r="2.300" fill={ICON_BLUE} />
        <circle cx="14" cy="3.500" r="1.500" fill={ICON_ORANGE} />
        <circle cx="24" cy="13.500" r="1.500" fill={ICON_ORANGE} />
        <circle cx="21" cy="20" r="1.500" fill={ICON_ORANGE} />
        <circle cx="14" cy="21" r="1.500" fill={ICON_ORANGE} />
        <circle cx="4" cy="22" r="1.500" fill={ICON_ORANGE} />
      </>
    ),
  },
  {
    name: 'Sankey',
    icon: (
      <>
        <path d="M4 3c9 0 11 12 21 12v5C15 20 12 12 4 11z" fill="#edab3c" />
        <path d="M25 3v8c-8 1-10 6-21 7v-3.500C14 13 16 3 25 3z" fill={ICON_BLUE} fillOpacity=".85" />
        <path d="M4 21c8 0 12-7 21-7" fill="none" stroke={ICON_BLUE} strokeWidth="2" />
      </>
    ),
  },
  {
    name: 'Rect tree',
    icon: (
      <>
        <path d="M2 3h13v11H2zM17 11h9v10h-9z" fill={ICON_BLUE} />
        <path d="M17 3h9v6.500h-9zM2 15.500h13V21H2z" fill={ICON_ORANGE} />
      </>
    ),
  },
  {
    name: 'Image',
    icon: (
      <>
        <circle cx="14" cy="12" r="12" fill="#f59253" />
        <rect x="6.500" y="5.500" width="15" height="13" rx="2" fill="#fff" />
        <circle cx="10.500" cy="9" r="1.400" fill="#f59253" />
        <path d="M9 16.500l3-5 2.500 3.500 2-2.500 3 4z" fill="#f59253" />
      </>
    ),
  },
];

const TABS = ['Components', 'Style', 'Setting'];

function SidePanel() {
  const [tab, setTab] = useState('Components');

  return (
    <aside className="flex w-[283px] shrink-0 flex-col border-l border-[#ccc] bg-white text-[13px] text-[#444]">
      <h2 className="flex h-[47px] items-center justify-center border-b border-[#ccc] pb-[2px] text-[15px]">Page</h2>
      <div role="tablist" className="mx-[5px] flex h-[46px] border-b border-gray-100">
        {TABS.map((name) => (
          <button
            key={name}
            type="button"
            role="tab"
            aria-selected={tab === name}
            onClick={() => setTab(name)}
            className={`grow border-b-3 whitespace-nowrap ${tab === name ? 'border-[#2b8df0]' : 'border-transparent'}`}
          >
            {name}
          </button>
        ))}
      </div>

      <div className="flex grow flex-col gap-[10px] pt-5 pr-[13px] pb-3 pl-[15px]">
        <div className="grow border border-[#d4d4d4]">
          <button type="button" className="flex h-8 w-full items-center justify-between px-[10px]">
            Charts
            <FiChevronUp className="h-4 w-4" />
          </button>
          <ul className="grid grid-cols-3 px-[6px]">
            {CHART_TYPES.map(({ name, icon }) => (
              <li key={name} className="h-[59px]">
                <button type="button" className="flex w-full flex-col items-center gap-[5px] pt-[6px] text-xs whitespace-nowrap">
                  <svg viewBox="0 0 28 24" className="h-6 w-7 overflow-visible">{icon}</svg>
                  {name}
                </button>
              </li>
            ))}
          </ul>
        </div>
        {['Maps', 'Assists', 'Filters'].map((name) => (
          <button key={name} type="button" className="flex h-[34px] items-center justify-between border border-[#d4d4d4] px-[10px]">
            {name}
            <FiChevronDown className="h-4 w-4" />
          </button>
        ))}
      </div>
    </aside>
  );
}

export default function App() {
  return (
    <div className="flex min-h-screen flex-col bg-[#e6e6e6] font-['Open_Sans','Noto_Sans',sans-serif]">
      <Toolbar />
      <div className="flex grow">
        <main className="min-w-0 grow px-3 pt-[11px] pb-3">
          <div className="h-full bg-[#ededed] bg-[radial-gradient(circle_at_1px_1px,#c8c8c8_1px,transparent_1px)] bg-[length:calc(100%/114)_calc(100%/64)] pt-[15px] pr-4 pb-6 pl-5 shadow-[0_0_4px_1px_rgba(0,0,0,0.3)]">
            <div className="ml-[2px] flex h-16 items-center justify-between bg-white pr-6 pl-7">
              <h1 className="pt-[6px] text-[27px] font-bold text-[#222]">RETAIL ANALYSIS REPORT</h1>
              <div className="relative">
                <select aria-label="Year" defaultValue="1998" className="block h-[43px] w-[230px] appearance-none rounded-sm border border-[#cfd6df] bg-white pb-1 pl-3 text-[15px] text-[#444]">
                  <option>1997</option>
                  <option>1998</option>
                </select>
                <span className="pointer-events-none absolute top-[18px] right-3 border-x-5 border-t-5 border-x-transparent border-t-[#222]" />
              </div>
            </div>

            <div className="mt-[17px] mr-[2px] ml-[2px] flex">
              <div className="flex min-w-0 flex-[260] flex-col gap-[17px]">
                <Kpi title="Store Sales" value="$1,079" change="90.9%" className="flex-[165]" />
                <Kpi title="Profit" value="$647" change="90.4%" className="flex-[171]" />
              </div>
              <Card title="Sales ratio" className="ml-[17px] flex-[531]">
                <DonutChart />
              </Card>
              <Card title="Sales trend" className="ml-[30px] flex-[735]">
                <TrendChart />
              </Card>
            </div>

            <div className="mt-[27px] mr-[5px] flex gap-7">
              <SalesMap />
              <Card title="Sales distribution" className="flex-[736]">
                <DistributionChart />
              </Card>
            </div>
          </div>
        </main>
        <SidePanel />
      </div>
    </div>
  );
}
